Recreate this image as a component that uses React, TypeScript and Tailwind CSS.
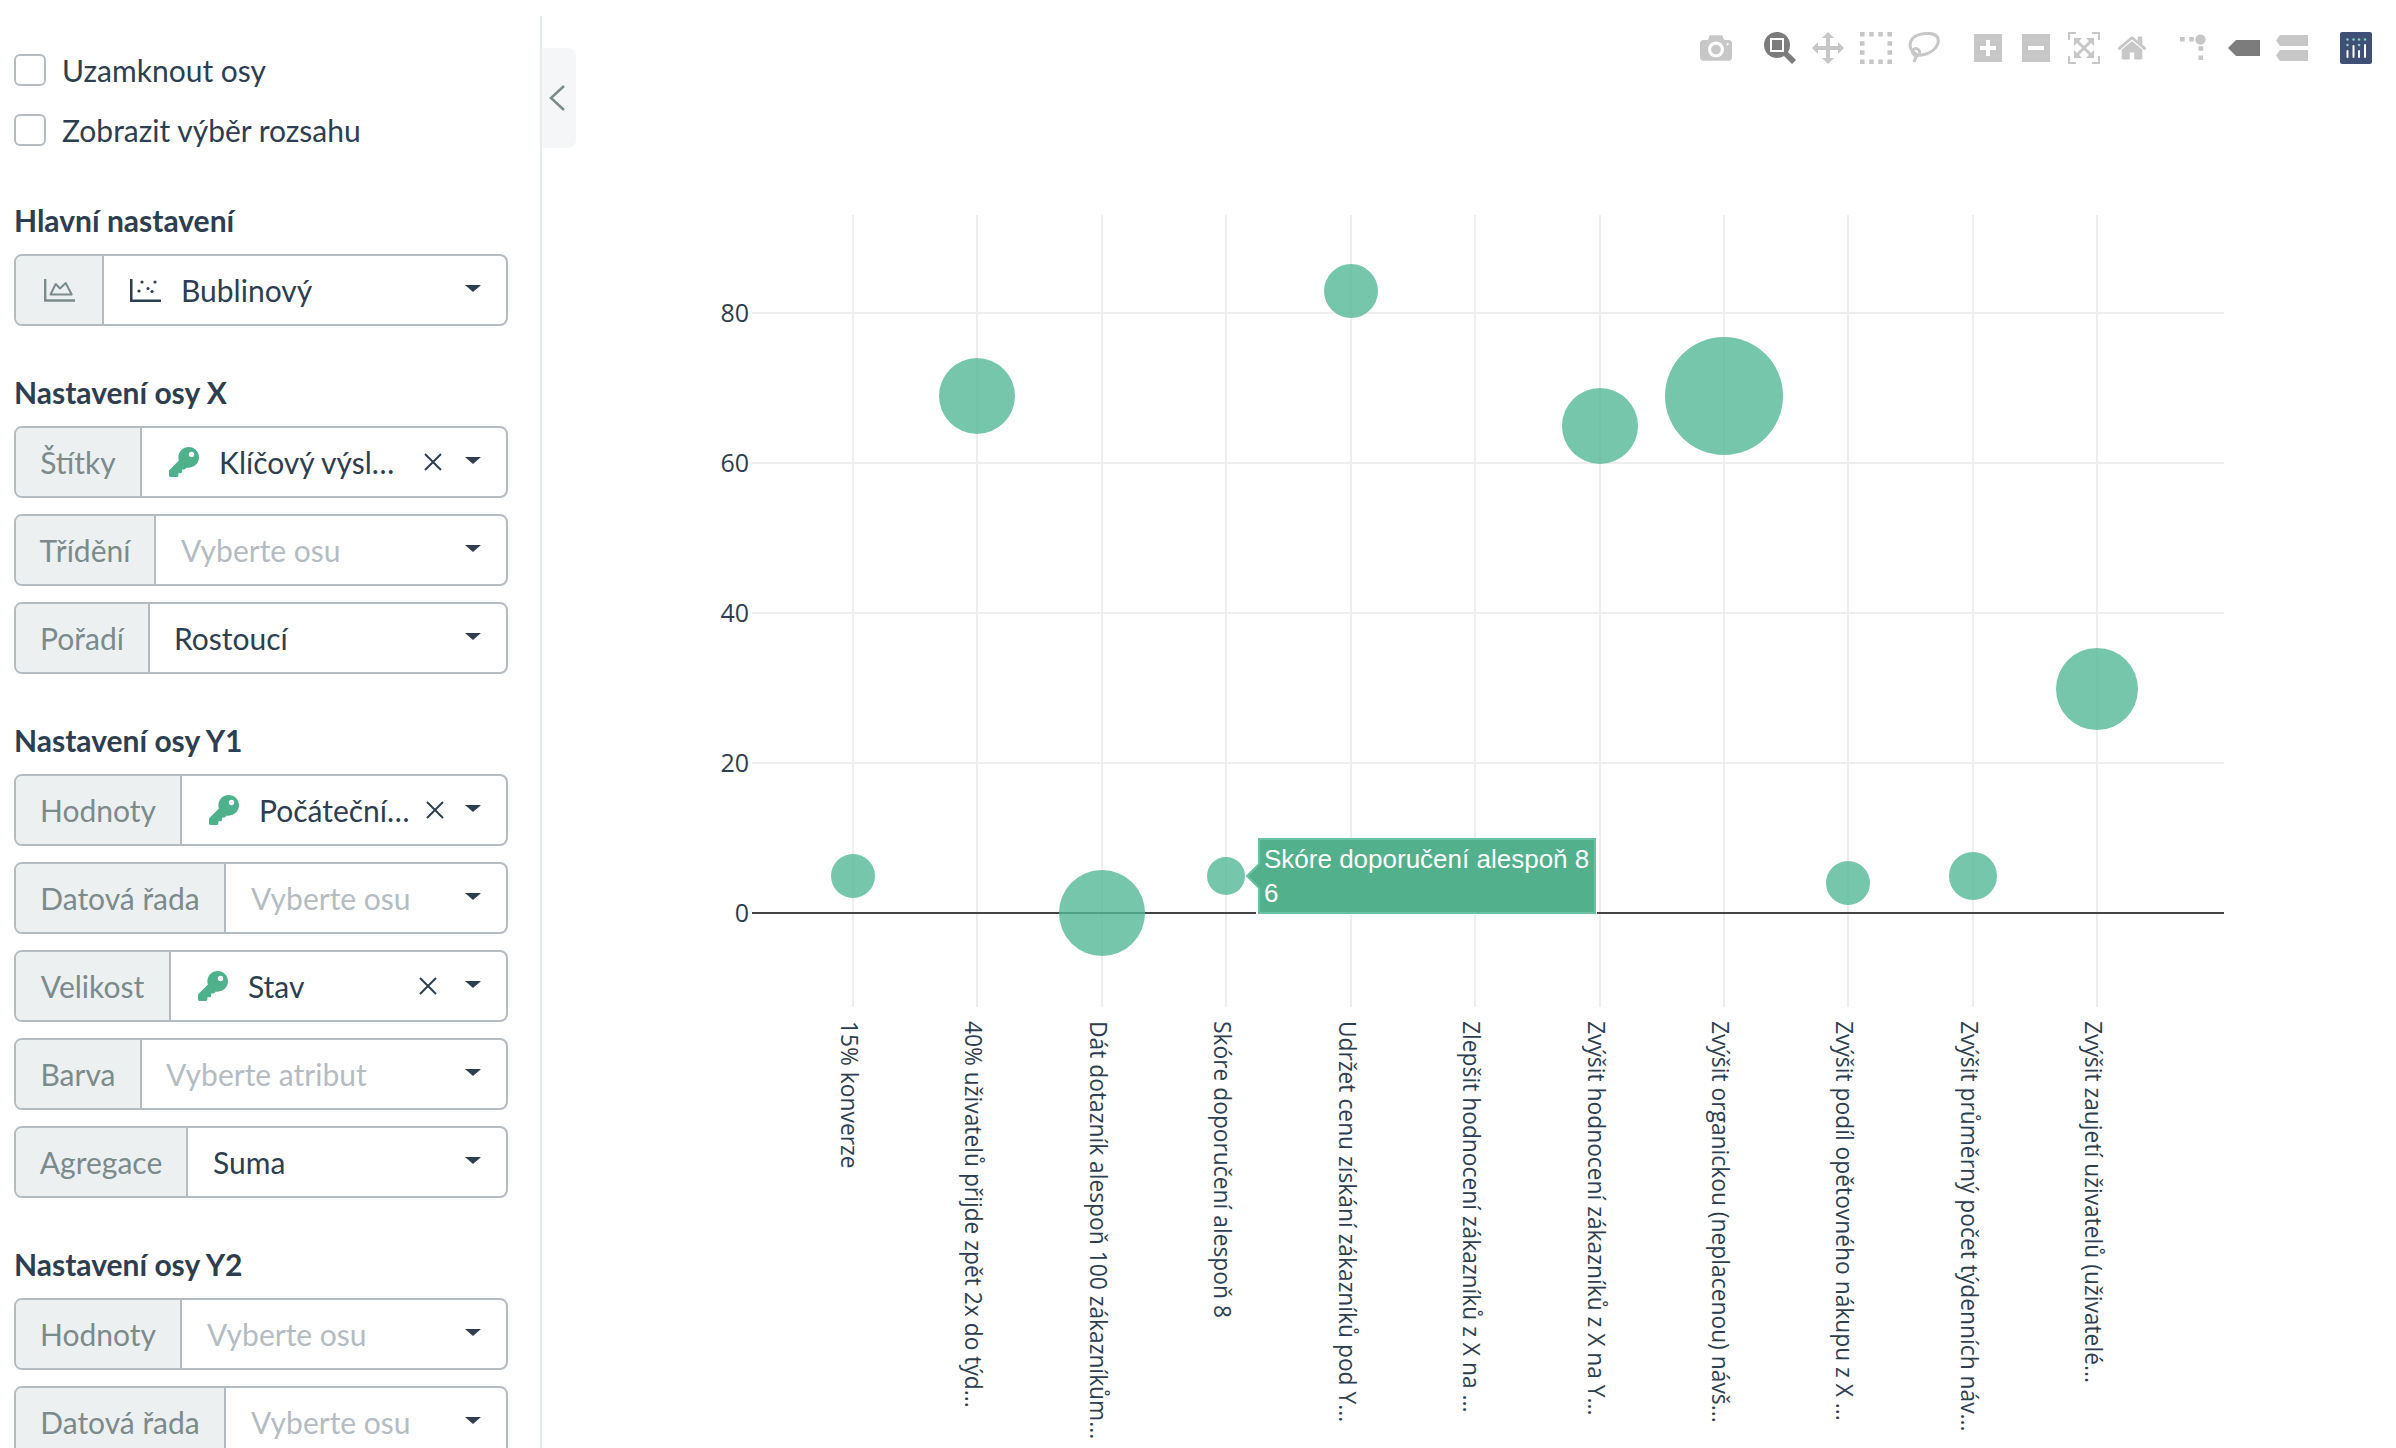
import { FaKey } from 'react-icons/fa';

const GRID_X = [853, 977, 1102, 1226, 1351, 1475, 1600, 1724, 1848, 1973, 2097];

const X_LABELS = [
  '15% konverze',
  '40% uživatelů přijde zpět 2x do týd...',
  'Dát dotazník alespoň 100 zákazníkům...',
  'Skóre doporučení alespoň 8',
  'Udržet cenu získání zákazníků pod Y...',
  'Zlepšit hodnocení zákazníků z X na ...',
  'Zvýšit hodnocení zákazníků z X na Y...',
  'Zvýšit organickou (neplacenou) návš...',
  'Zvýšit podíl opětovného nákupu z X ...',
  'Zvýšit průměrný počet týdenních náv...',
  'Zvýšit zaujetí uživatelů (uživatelé...',
];

const Y_TICKS = [
  { label: '80', y: 313 },
  { label: '60', y: 463 },
  { label: '40', y: 613 },
  { label: '20', y: 763 },
];

const BUBBLES = [
  { cx: 853, cy: 876, r: 22 },
  { cx: 977, cy: 396, r: 38 },
  { cx: 1102, cy: 913, r: 43 },
  { cx: 1226, cy: 876, r: 19 },
  { cx: 1351, cy: 291, r: 27 },
  { cx: 1600, cy: 426, r: 38 },
  { cx: 1724, cy: 396, r: 59 },
  { cx: 1848, cy: 883, r: 22 },
  { cx: 1973, cy: 876, r: 24 },
  { cx: 2097, cy: 689, r: 41 },
];

/* ── plotly modebar icons ── */
function Plot({ d, w = 1000, active }: { d: string; w?: number; active?: boolean }) {
  return (
    <svg viewBox={`0 0 ${w} 1000`} className={`h-8 w-8 ${active ? 'fill-[#7c7c7c]' : 'fill-[#c7c7c7]'}`}>
      <path d={d} transform="matrix(1 0 0 -1 0 850)" />
    </svg>
  );
}

const CAMERA = 'm500 450c-83 0-150-67-150-150 0-83 67-150 150-150 83 0 150 67 150 150 0 83-67 150-150 150z m400 150h-120c-16 0-34 13-39 29l-31 93c-6 15-23 28-40 28h-340c-16 0-34-13-39-28l-31-94c-6-15-23-28-40-28h-120c-55 0-100-45-100-100v-450c0-55 45-100 100-100h800c55 0 100 45 100 100v450c0 55-45 100-100 100z m-400-550c-138 0-250 112-250 250 0 138 112 250 250 250 138 0 250-112 250-250 0-138-112-250-250-250z m365 380c-19 0-35 16-35 35 0 19 16 35 35 35 19 0 35-16 35-35 0-19-16-35-35-35z';
const ZOOM = 'm1000-25l-250 251c40 63 63 138 63 219 0 224-182 406-406 406-225 0-407-182-407-406s182-406 407-406c80 0 155 22 218 62l250-250 125 124z m-812 250l0 438 437 0 0-438-437 0z m62 375l313 0 0-312-313 0 0 312z';
const PAN = 'm1000 350l-187 188 0-125-250 0 0 250 125 0-188 187-187-187 125 0 0-250-250 0 0 125-188-188 186-187 0 125 252 0 0-250-125 0 187-188 188 188-125 0 0 250 250 0 0-126 187 188z';
const SELECT = 'm0 850l0-143 143 0 0 143-143 0z m286 0l0-143 143 0 0 143-143 0z m285 0l0-143 143 0 0 143-143 0z m286 0l0-143 143 0 0 143-143 0z m-857-286l0-143 143 0 0 143-143 0z m857 0l0-143 143 0 0 143-143 0z m-857-285l0-143 143 0 0 143-143 0z m857 0l0-143 143 0 0 143-143 0z m-857-286l0-143 143 0 0 143-143 0z m286 0l0-143 143 0 0 143-143 0z m285 0l0-143 143 0 0 143-143 0z m286 0l0-143 143 0 0 143-143 0z';
const PLUS = 'm1 787l0-875 875 0 0 875-875 0z m687-500l-187 0 0-187-125 0 0 187-188 0 0 125 188 0 0 187 125 0 0-187 187 0 0-125z';
const MINUS = 'm0 788l0-876 875 0 0 876-875 0z m688-500l-500 0 0 125 500 0 0-125z';
const AUTOSCALE = 'm250 850l-187 0-63 0 0-62 0-188 63 0 0 188 187 0 0 62z m688 0l-188 0 0-62 188 0 0-188 62 0 0 188 0 62-62 0z m-875-938l0 188-63 0 0-188 0-62 63 0 187 0 0 62-187 0z m875 188l0-188-188 0 0-62 188 0 62 0 0 62 0 188-62 0z m-125 188l-1 0-93-94-156 156 156 156 92-93 2 0 0 250-250 0 0-2 93-92-156-156-156 156 94 92 0 2-250 0 0-250 0 0 93 93 157-156-157-156-93 94 0 0 0-250 250 0 0 0-94 93 156 157 156-157-93-93 0 0 250 0 0 250z';
const HOME = 'm786 296v-267q0-15-11-26t-25-10h-214v214h-143v-214h-214q-15 0-25 10t-11 26v267q0 1 0 2t0 2l321 264 321-264q1-1 1-4z m124 39l-34-41q-5-5-12-6h-2q-7 0-12 3l-386 322-386-322q-7-4-13-4-7 2-12 7l-35 41q-4 5-3 13t6 12l401 334q18 15 42 15t43-15l136-114v109q0 8 5 13t13 5h107q8 0 13-5t5-13v-227l122-102q5-5 6-12t-4-13z';
const SPIKE = 'M512 409c0-57-46-104-103-104-57 0-104 47-104 104 0 57 47 103 104 103 57 0 103-46 103-103z m-327-39l92 0 0 92-92 0z m-185 0l92 0 0 92-92 0z m370-186l92 0 0 93-92 0z m0-184l92 0 0 92-92 0z';
const CLOSEST = 'm375 725l0 0-375-375 375-374 0-1 1125 0 0 750-1125 0z';

function LassoIcon() {
  return (
    <svg viewBox="0 0 32 32" fill="none" stroke="#c7c7c7" strokeWidth={3} className="h-8 w-8">
      <path d="M9 22.500C2 19 0 12 4.500 6.500 10 1 24-.5 29 4.500c4 6-2 15-11 17.500-6 2-13 2-13.500-2 0-3 3-4 5-3 3 1.500 2.500 5 .5 6.500-1.500 1.500-3 .5-4-1" />
      <path d="M8.500 23.500 6 30" />
    </svg>
  );
}

function SpikeIcon() {
  return (
    <svg viewBox="0 0 32 32" className="h-8 w-8 fill-[#c7c7c7]">
      <path d={SPIKE} transform="translate(0 28) scale(0.05 -0.05)" />
    </svg>
  );
}

function CompareIcon() {
  return (
    <svg viewBox="0 0 32 32" className="h-8 w-8 fill-[#c7c7c7]">
      <path d="M4 3h28v11H4L0 8.500z M4 18h28v11H4L0 23.500z" />
    </svg>
  );
}

function PlotlyLogo() {
  const cols = [7.5, 13.5, 19, 25];
  const tops = [18, 13, 18, 12];
  return (
    <svg viewBox="0 0 32 32" className="h-8 w-8">
      <rect width="32" height="32" rx="2" fill="#3f4f75" />
      {cols.map((x) => <circle key={x} cx={x} cy="7.500" r="1.300" fill="#80cfbe" />)}
      <circle cx={cols[0]} cy="13" r="1.300" fill="#80cfbe" />
      <circle cx={cols[2]} cy="13" r="1.300" fill="#80cfbe" />
      {cols.map((x, i) => <rect key={x} x={x - 1} y={tops[i]} width="2" height={26 - tops[i]} rx="1" fill="#fff" />)}
    </svg>
  );
}

/* ── sidebar icons ── */
function AreaIcon() {
  return (
    <svg viewBox="0 0 31 23" fill="none" stroke="#7b8a8b" strokeWidth={2.4} className="h-[23px] w-[31px]">
      <path d="M1.200 0v21.500H31" />
      <path d="M6.500 15.500L11.700 5 16 9.500 21.700 4l6 11.500z" strokeLinejoin="round" strokeWidth={2} />
    </svg>
  );
}

function ScatterIcon() {
  return (
    <svg viewBox="0 0 31 23" className="h-[23px] w-[31px] shrink-0 fill-[#2c3e50]">
      <path d="M0 0h2.500v20.500H31V23H0z" />
      <circle cx="12" cy="3" r="1.600" />
      <circle cx="25" cy="3" r="1.600" />
      <circle cx="18" cy="9.500" r="1.600" />
      <circle cx="9" cy="12" r="1.600" />
      <circle cx="22" cy="12.500" r="1.600" />
    </svg>
  );
}

function Caret() {
  return <span className="-mt-1 h-0 w-0 shrink-0 border-x-[8.500px] border-t-[7px] border-x-transparent border-t-[#2c3e50]" />;
}

function Clear({ className }: { className: string }) {
  return (
    <svg viewBox="0 0 18 18" fill="none" stroke="#2c3e50" strokeWidth={2} className={`h-[18px] w-[18px] shrink-0 ${className}`}>
      <path d="M1 1l16 16M17 1L1 17" />
    </svg>
  );
}

function KeyMark() {
  return <FaKey className="h-[30px] w-[30px] shrink-0 text-[#4fb08c]" />;
}

type FieldProps = {
  label: React.ReactNode;
  width: string;
  value?: string;
  placeholder?: string;
  icon?: React.ReactNode;
  pad?: string;
  clear?: string;
};

function Field({ label, width, value, placeholder, icon, pad = 'pl-[25px]', clear }: FieldProps) {
  return (
    <div className="mb-4 flex h-[72px] w-[494px] overflow-hidden rounded-lg border-2 border-[#b4bcc2] bg-white">
      <div className={`flex shrink-0 items-center justify-center border-r-2 border-[#b4bcc2] bg-[#ecf0f1] text-[#7b8a8b] ${width}`}>
        {label}
      </div>
      <div className={`flex min-w-0 flex-1 items-center gap-5 pr-[25px] ${pad}`}>
        {icon}
        <span className={`min-w-0 flex-1 whitespace-nowrap ${value ? 'text-[#2c3e50]' : 'text-[#b4bcc2]'}`}>{value ?? placeholder}</span>
        {clear && <Clear className={clear} />}
        <Caret />
      </div>
    </div>
  );
}

function Section({ title, first, children }: { title: string; first?: boolean; children: React.ReactNode }) {
  return (
    <section className={first ? 'mt-[55px]' : 'mt-[47px]'}>
      <h2 className="mb-[13px] h-10 text-[30px] leading-[38px] font-bold text-[#2c3e50]">{title}</h2>
      {children}
    </section>
  );
}

function Check({ label }: { label: string }) {
  return (
    <label className="flex h-8 items-center gap-4">
      <span className="h-8 w-8 rounded-md border-2 border-[#b4bcc2] bg-white" />
      <span className="text-[#2c3e50]">{label}</span>
    </label>
  );
}

function Chart() {
  return (
    <svg width="1820" height="1448" viewBox="576 0 1820 1448" className="block">
      {GRID_X.map((x) => <line key={x} x1={x} x2={x} y1="215" y2="1007" stroke="#eee" strokeWidth="2" />)}
      {Y_TICKS.map((t) => <line key={t.label} x1="752" x2="2224" y1={t.y} y2={t.y} stroke="#eee" strokeWidth="2" />)}
      <line x1="752" x2="2224" y1="913" y2="913" stroke="#444" strokeWidth="2" />
      {[...Y_TICKS, { label: '0', y: 913 }].map((t) => (
        <text key={t.label} x="749" y={t.y + 9} textAnchor="end" fill="#2c3e50" fontSize="25" fontFamily="'Open Sans', sans-serif">
          {t.label}
        </text>
      ))}
      {X_LABELS.map((label, i) => (
        <text
          key={label}
          transform={`translate(${GRID_X[i] - 12} 1021) rotate(90)`}
          fill="#2c3e50"
          fontSize="22.8"
          fontFamily="'Open Sans', sans-serif"
        >
          {label}
        </text>
      ))}
      {BUBBLES.map((b) => <circle key={b.cx} cx={b.cx} cy={b.cy} r={b.r} fill="#52b895" opacity="0.8" />)}

      {/* hover label */}
      <rect x="1256" y="838" width="341" height="77" fill="#fff" />
      <path d="M1247 876l12-12v-25h336v74h-336v-25z" fill="#52b08c" stroke="#6cc3a4" strokeWidth="2" />
      <text x="1264" y="868" fill="#fff" fontSize="26" fontFamily="'Liberation Sans', sans-serif">Skóre doporučení alespoň 8</text>
      <text x="1264" y="902" fill="#fff" fontSize="26" fontFamily="'Liberation Sans', sans-serif">6</text>
    </svg>
  );
}

export default function App() {
  return (
    <div className="flex h-screen w-full overflow-hidden bg-white font-['Lato',sans-serif] text-[30px]">
      {/* ── Sidebar ── */}
      <aside className="mt-4 h-full w-[542px] shrink-0 border-r-2 border-[#e6ebee] pt-[38px] pl-[14px]">
        <div className="flex flex-col gap-7">
          <Check label="Uzamknout osy" />
          <Check label="Zobrazit výběr rozsahu" />
        </div>

        <Section title="Hlavní nastavení" first>
          <Field label={<AreaIcon />} width="w-[88px]" value="Bublinový" icon={<ScatterIcon />} pad="pl-[26px]" />
        </Section>

        <Section title="Nastavení osy X">
          <Field label="Štítky" width="w-[126px]" value="Klíčový výsl…" icon={<KeyMark />} pad="pl-[27px]" clear="mr-[3px]" />
          <Field label="Třídění" width="w-[140px]" placeholder="Vyberte osu" />
          <Field label="Pořadí" width="w-[134px]" value="Rostoucí" pad="pl-[24px]" />
        </Section>

        <Section title="Nastavení osy Y1">
          <Field label="Hodnoty" width="w-[166px]" value="Počáteční…" icon={<KeyMark />} pad="pl-[27px]" clear="mr-[1px]" />
          <Field label="Datová řada" width="w-[210px]" placeholder="Vyberte osu" />
          <Field label="Velikost" width="w-[155px]" value="Stav" icon={<KeyMark />} pad="pl-[27px]" clear="mr-[8px]" />
          <Field label="Barva" width="w-[126px]" placeholder="Vyberte atribut" pad="pl-[24px]" />
          <Field label="Agregace" width="w-[172px]" value="Suma" />
        </Section>

        <Section title="Nastavení osy Y2">
          <Field label="Hodnoty" width="w-[166px]" placeholder="Vyberte osu" />
          <Field label="Datová řada" width="w-[210px]" placeholder="Vyberte osu" />
        </Section>
      </aside>

      {/* collapse tab */}
      <div className="mt-12 -mr-[34px] flex h-[100px] w-[34px] shrink-0 items-center rounded-r-lg bg-[#f4f6f7] pl-[7px]">
        <svg viewBox="0 0 16 26" fill="none" stroke="#7b8a8b" strokeWidth={2.5} className="h-[26px] w-4">
          <path d="M15 1L2 13l13 12" />
        </svg>
      </div>

      {/* ── Chart ── */}
      <main className="relative min-w-0 flex-1 pl-[34px]">
        <Chart />
        <div className="absolute top-8 right-6 flex gap-8">
          <Plot d={CAMERA} />
          <div className="flex gap-4">
            <Plot d={ZOOM} active />
            <Plot d={PAN} />
            <Plot d={SELECT} />
            <LassoIcon />
          </div>
          <div className="flex gap-4">
            <Plot d={PLUS} w={875} />
            <Plot d={MINUS} w={875} />
            <Plot d={AUTOSCALE} />
            <Plot d={HOME} w={928.6} />
          </div>
          <div className="flex gap-4">
            <SpikeIcon />
            <Plot d={CLOSEST} w={1500} active />
            <CompareIcon />
          </div>
          <PlotlyLogo />
        </div>
      </main>
    </div>
  );
}
